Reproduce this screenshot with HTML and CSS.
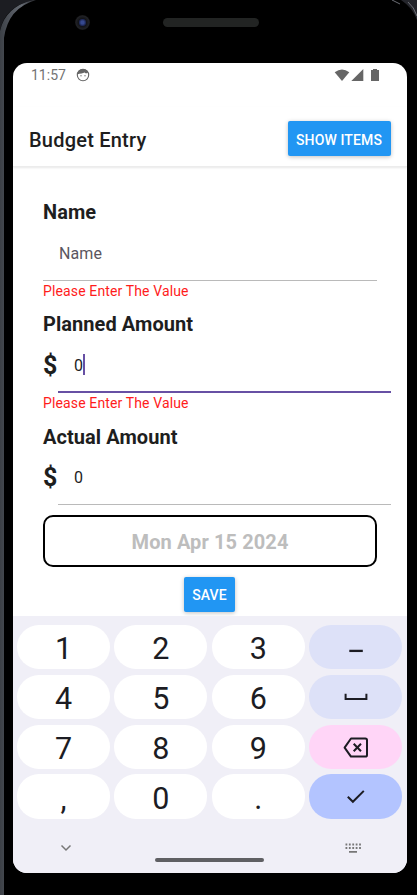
FILE: index.html
```html
<!DOCTYPE html>
<html lang="en">
<head>
<meta charset="utf-8">
<title>Budget Entry</title>
<link rel="stylesheet" href="styles.css">
</head>
<body>
<div class="phone">
  <svg class="frame" width="417" height="895" viewBox="0 0 417 895" aria-hidden="true">
    <defs><linearGradient id="rim"><stop offset="0" stop-color="#3c4046"/><stop offset=".6" stop-color="#656a73"/><stop offset="1" stop-color="#25272b"/></linearGradient></defs>
    <path d="M0 0H33Q4 7 0 31Z" fill="#1c1d22"/>
    <path d="M0 31Q5 7 33 0H36Q8 8 4 38V895H0Z" fill="url(#rim)"/>
    <path d="M401 0H417V20Q413 8 401 0Z" fill="#24252b"/>
    <path d="M392 0L400 4M408 2Q414 7 417 16" stroke="#6b6d74" fill="none"/>
  </svg>
  <div class="bezel">
    <span class="camera"></span>
    <span class="speaker"></span>
  </div>
  <main class="screen">
    <div class="status">
      <span class="clock">11:57</span>
      <svg class="face" width="14" height="14" viewBox="0 0 14 14"><circle cx="7" cy="7" r="5.7" fill="none" stroke="#666" stroke-width="1.1"/><path d="M1.8 4.6Q3 1 7 1t5.2 3.6L10 5.4 8.6 4.5 5.6 5.6Q3 5.8 1.8 6.2Z" fill="#666"/><circle cx="5" cy="7.8" r=".7" fill="#777"/><circle cx="9" cy="7.8" r=".7" fill="#777"/></svg>
      <svg class="signals" width="46" height="14" viewBox="0 0 46 14" fill="#666"><path d="M.7 4.2Q8 -1.3 15.3 4.2L8 13Z"/><path d="M17.3 13H29.3V1Z"/><path d="M37 2h2V1h4v1h2v11h-8Z"/></svg>
    </div>
    <header class="appbar">
      <h1>Budget Entry</h1>
      <button class="btn show">SHOW ITEMS</button>
    </header>
    <form class="form">
      <label class="label">Name</label>
      <div class="field name">Name</div>
      <p class="error">Please Enter The Value</p>
      <label class="label">Planned Amount</label>
      <div class="money"><b>$</b><div class="field amount active">0<i class="caret"></i></div></div>
      <p class="error">Please Enter The Value</p>
      <label class="label actual">Actual Amount</label>
      <div class="money"><b>$</b><div class="field amount">0</div></div>
      <div class="date">Mon Apr 15 2024</div>
      <button class="btn save" type="button">SAVE</button>
    </form>
    <section class="keyboard">
      <div class="keys">
        <span>1</span><span>2</span><span>3</span>
        <span class="soft"><svg width="30" height="30" viewBox="0 0 30 30"><path d="M8.3 18.9H21.8" stroke-width="2.3"/></svg></span>
        <span>4</span><span>5</span><span>6</span>
        <span class="soft"><svg width="30" height="30" viewBox="0 0 30 30"><path d="M4.6 11.8V17H25.4V11.8" stroke-width="2"/></svg></span>
        <span>7</span><span>8</span><span>9</span>
        <span class="pink"><svg width="30" height="30" viewBox="0 0 30 30"><path d="M10 6.5H24.3Q26 6.5 26 8.2V22.9Q26 24.6 24.3 24.6H10L3.6 15.6Z" stroke-width="2" stroke-linejoin="round"/><path d="M12.7 11.8L20 19.3M20 11.8L12.7 19.3" stroke-width="2"/></svg></span>
        <span>,</span><span>0</span><span>.</span>
        <span class="blue"><svg width="30" height="30" viewBox="0 0 30 30"><path d="M6.8 14.8L11.9 19.8L22.8 8.9" stroke-width="2"/></svg></span>
      </div>
      <div class="nav">
        <svg class="down" width="12" height="8" viewBox="0 0 12 8"><path d="M1.5 1.5L6 6L10.5 1.5" fill="none" stroke="#777" stroke-width="1.5"/></svg>
        <span class="home"></span>
        <svg class="kbd" width="16" height="10" viewBox="0 0 16 10"><path d="M.5 1.5H16M.5 5H16" stroke="#777" stroke-width="2" stroke-dasharray="1.8 1.6"/><path d="M4 8.8H12" stroke="#777" stroke-width="1.7"/></svg>
      </div>
    </section>
  </main>
</div>
</body>
</html>
```
FILE: styles.css
```css
* { box-sizing: border-box; }
body { margin: 0; background: #000; font-family: Roboto, sans-serif; color: #1e1e1e; }
.phone { position: relative; width: 417px; height: 895px; background: #000; overflow: hidden; }
.frame { position: absolute; left: 0; top: 0; }
.bezel { height: 63px; display: flex; align-items: flex-start; padding: 15px 0 0 75px; }
.camera { width: 15px; height: 15px; border-radius: 50%; background: radial-gradient(circle, #36498f 0 1.5px, #182047 3.5px, #121318 4px, #202125 6.5px, #141414 7.5px); }
.speaker { width: 96px; height: 9px; margin: 3px 0 0 73px; border-radius: 5px; background: #222423; }
.screen { position: relative; width: 394px; height: 810px; margin-left: 13px; border-radius: 14px; background: #fff; overflow: hidden; display: flex; flex-direction: column; }
.status { height: 44px; flex: none; display: flex; align-items: flex-start; padding: 5px 27px 0 18px; color: #737373; }
.clock { font-size: 14px; line-height: 15px; width: 45px; }
.signals { margin-left: auto; }
.appbar { height: 60px; flex: none; display: flex; align-items: flex-start; justify-content: space-between; padding: 14px 16.5px 0 16px; border-bottom: 1px solid #ececec; box-shadow: 0 1px 2px #00000018; }
h1 { margin: 6px 0 0; font-size: 20px; line-height: 26px; font-weight: 500; letter-spacing: .22px; }
.btn { border: 0; padding: 0; border-radius: 2px; background: #2196f3; color: #fff; font: 500 14px/37px Roboto, sans-serif; height: 35px; box-shadow: 0 1px 4px #00000040; text-align: center; letter-spacing: .12px; }
.show { width: 103px; padding-top: 1px; }
.form { display: flex; flex-direction: column; height: 449px; flex: none; padding: 32px 16px 0 30px; }
.label { font-size: 20px; font-weight: 700; line-height: 26px; height: 26px; letter-spacing: .06px; }
.actual { line-height: 28px; }
.field { height: 56px; border-bottom: 1px solid #bababa; font-size: 16px; line-height: 56px; padding-left: 16px; }
.name { width: 334px; color: #5a5660; line-height: 58px; letter-spacing: .1px; }
.error { margin: 0; height: 30px; color: #ff1c1c; font-size: 14px; line-height: 21px; letter-spacing: .13px; }
.money { display: flex; height: 56px; }
.money b { width: 15px; font-size: 25px; line-height: 58px; }
.amount { flex: 1; display: flex; align-items: center; padding-top: 3px; }
.active { border-bottom: 2px solid #6750a4; }
.caret { width: 2px; height: 21px; margin-top: -2px; background: #6750a4; }
.date { flex: none; width: 334px; height: 52px; margin-top: 10px; border: 2px solid #000; border-radius: 10px; color: #bdbdbd; font-size: 20px; font-weight: 700; line-height: 50px; text-align: center; letter-spacing: .1px; }
.save { width: 51px; margin: 10px 0 0 141px; flex: none; }
.keyboard { position: relative; flex: 1; background: #f0eff7; padding: 9px 4.5px 0 4px; }
.keys { display: grid; grid-template-columns: repeat(4, 93px); grid-auto-rows: 44.3px; column-gap: 4.4px; row-gap: 5.5px; }
.keys span { display: flex; align-items: center; justify-content: center; border-radius: 22px; background: #fff; font: 400 30.5px/44px Roboto, sans-serif; color: #1c1c23; }
.keys span:not(.soft, .pink, .blue) { padding-top: 4px; }
.keys svg { fill: none; stroke: #1c1c23; }
.keys .soft { background: #dde1f8; }
.keys .pink { background: #ffd5f7; }
.keys .blue { background: #b3c4ff; }
.nav { display: flex; padding: 25px 0 0 43px; align-items: flex-start; }
.down { margin-top: 0; }
.home { width: 109px; height: 4px; border-radius: 2px; background: #5f5f63; margin: 14px 0 0 83px; }
.kbd { margin: -1px 0 0 81px; }
```
